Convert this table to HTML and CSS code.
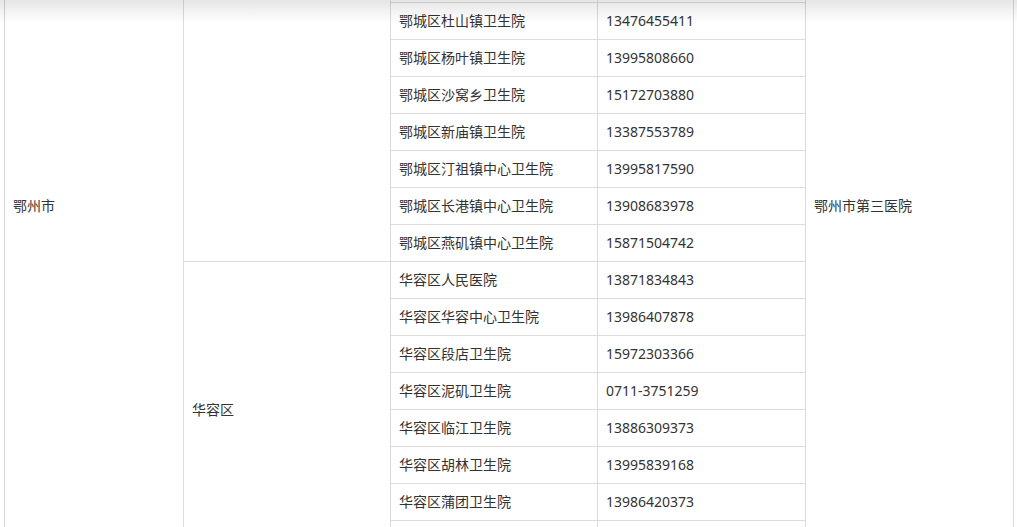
FILE: index.html
```html
<!DOCTYPE html>
<html lang="zh-CN">
<head>
<meta charset="utf-8">
<title>发热门诊</title>
<link rel="stylesheet" href="styles.css">
</head>
<body>
<div class="viewport">
  <div class="top-shade"></div>
  <table class="clinic-table">
    <colgroup>
      <col class="c-city"><col class="c-dist"><col class="c-name"><col class="c-tel"><col class="c-hosp">
    </colgroup>
    <tbody>
      <tr>
        <td rowspan="31" class="mid">鄂州市</td>
        <td rowspan="17" class="mid"></td>
        <td></td><td></td>
        <td rowspan="31" class="mid">鄂州市第三医院</td>
      </tr>
      <tr><td></td><td></td></tr>
      <tr><td></td><td></td></tr>
      <tr><td></td><td></td></tr>
      <tr><td></td><td></td></tr>
      <tr><td></td><td></td></tr>
      <tr><td></td><td></td></tr>
      <tr><td></td><td></td></tr>
      <tr><td></td><td></td></tr>
      <tr><td></td><td></td></tr>
      <tr><td>鄂城区杜山镇卫生院</td><td>13476455411</td></tr>
      <tr><td>鄂城区杨叶镇卫生院</td><td>13995808660</td></tr>
      <tr><td>鄂城区沙窝乡卫生院</td><td>15172703880</td></tr>
      <tr><td>鄂城区新庙镇卫生院</td><td>13387553789</td></tr>
      <tr><td>鄂城区汀祖镇中心卫生院</td><td>13995817590</td></tr>
      <tr><td>鄂城区长港镇中心卫生院</td><td>13908683978</td></tr>
      <tr><td>鄂城区燕矶镇中心卫生院</td><td>15871504742</td></tr>
      <tr>
        <td rowspan="8" class="mid">华容区</td>
        <td>华容区人民医院</td><td>13871834843</td>
      </tr>
      <tr><td>华容区华容中心卫生院</td><td>13986407878</td></tr>
      <tr><td>华容区段店卫生院</td><td>15972303366</td></tr>
      <tr><td>华容区泥矶卫生院</td><td>0711-3751259</td></tr>
      <tr><td>华容区临江卫生院</td><td>13886309373</td></tr>
      <tr><td>华容区胡林卫生院</td><td>13995839168</td></tr>
      <tr><td>华容区蒲团卫生院</td><td>13986420373</td></tr>
      <tr><td></td><td></td></tr>
      <tr>
        <td rowspan="6" class="mid"></td>
        <td></td><td></td>
      </tr>
      <tr><td></td><td></td></tr>
      <tr><td></td><td></td></tr>
      <tr><td></td><td></td></tr>
      <tr><td></td><td></td></tr>
      <tr><td></td><td></td></tr>
    </tbody>
  </table>
</div>
</body>
</html>
```

FILE: styles.css
```css
html, body {
  margin: 0;
  padding: 0;
  background: #fff;
}

.viewport {
  position: relative;
  width: 1017px;
  height: 527px;
  overflow: hidden;
  background: #fff;
}

.top-shade {
  position: absolute;
  top: 0;
  left: 0;
  right: 0;
  height: 24px;
  background: linear-gradient(to bottom, rgba(0, 0, 0, 0.10) 0%, rgba(0, 0, 0, 0.05) 45%, rgba(0, 0, 0, 0) 100%);
  pointer-events: none;
  z-index: 2;
}

.clinic-table {
  margin: -368px 0 0 4px;
  width: 1010px;
  table-layout: fixed;
  border-collapse: separate;
  border-spacing: 0;
  border-top: 1px solid #dcdcdc;
  border-left: 1px solid #d4d4d4;
  font-family: "Noto Sans", "Noto Sans CJK SC", sans-serif;
  font-size: 14px;
  color: #333;
}

.c-city { width: 179px; }
.c-dist { width: 207px; }
.c-name { width: 207px; }
.c-tel  { width: 208px; }
.c-hosp { width: 208px; }

.clinic-table td {
  box-sizing: border-box;
  height: 37px;
  padding: 0 8px;
  border-right: 1px solid #dcdcdc;
  border-bottom: 1px solid #dcdcdc;
  vertical-align: middle;
  white-space: nowrap;
  line-height: 20px;
}

.clinic-table td.mid {
  vertical-align: middle;
}
```
